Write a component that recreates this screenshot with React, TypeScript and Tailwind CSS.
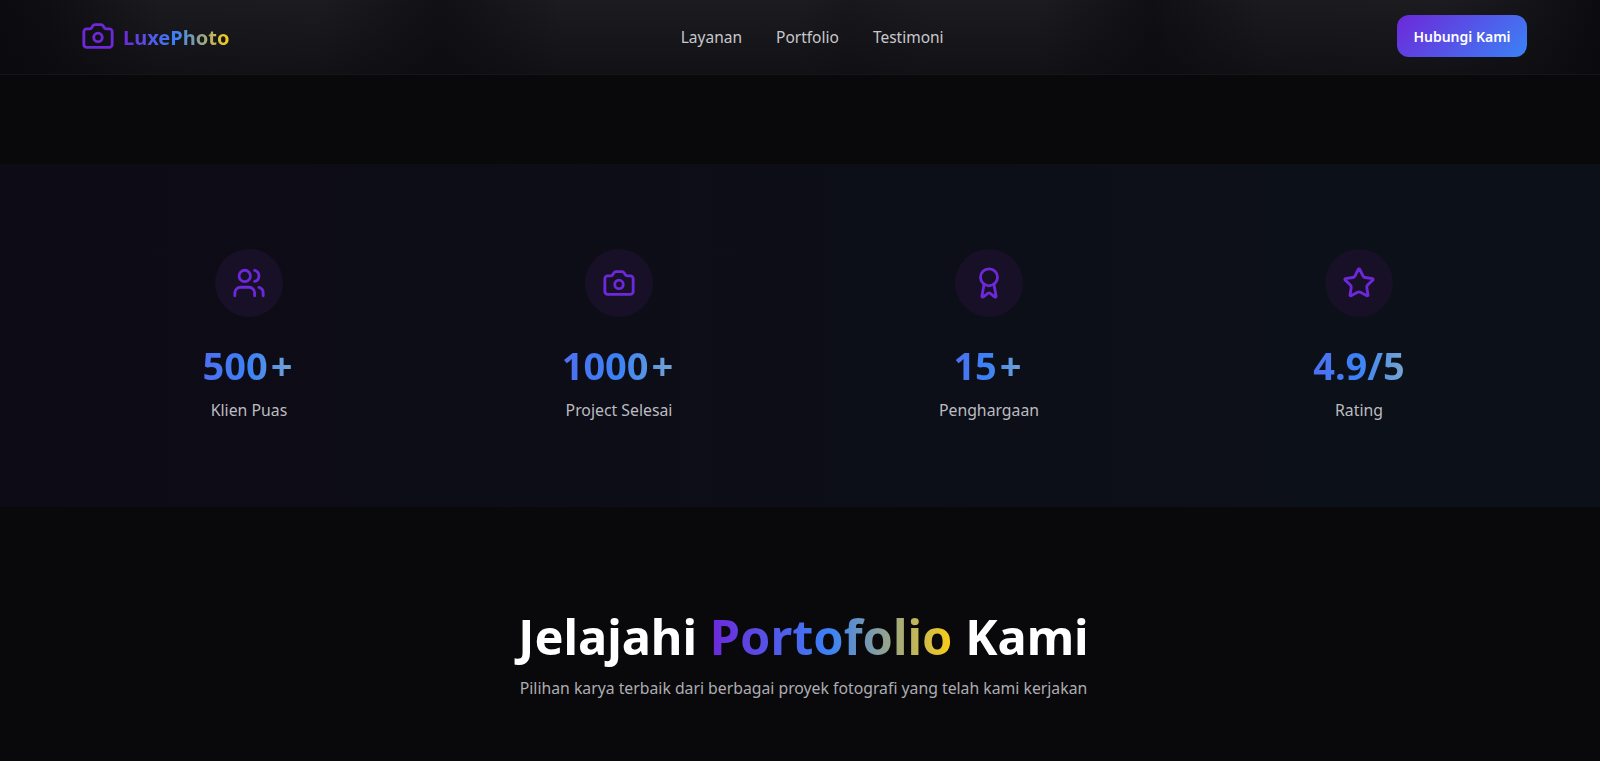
import { Camera, Users, Award, Star } from "lucide-react";

const font = "font-['Noto_Sans','Open_Sans',sans-serif]";

const stats = [
  { icon: Users, value: "500", suffix: "+", label: "Klien Puas" },
  { icon: Camera, value: "1000", suffix: "+", label: "Project Selesai" },
  { icon: Award, value: "15", suffix: "+", label: "Penghargaan" },
  { icon: Star, value: "4.9/5", suffix: "", label: "Rating" },
];

export default function App() {
  return (
    <div className={`${font} h-[761px] overflow-hidden bg-[#09090c] text-white`}>
      <header className="h-[75px] border-b border-[#15151a] bg-[linear-gradient(90deg,#0c0c10_0%,#0f0f13_3%,#1a1a1f_10%,#1b1b20_20%,#111115_27.5%,#1b1b20_35%,#1b1b20_50%,#18181c_53%,#1b1b20_58%,#1b1b20_65%,#101014_72%,#1a1a1f_79%,#1b1b20_90%,#141418_96%,#0c0c10_100%)]">
        <div className="h-full bg-[linear-gradient(180deg,rgba(9,9,12,0)_0%,rgba(9,9,12,0.5)_100%)]">
          <div className="flex h-full items-center justify-between pl-20 pr-[73px]">
            <div className="ml-[1px] flex items-center gap-[8px]">
              <Camera size={34} strokeWidth={2} className="-mt-[2px] text-[#6d28d9]" />
              <span className="mt-[2px] bg-[linear-gradient(90deg,#6d28d9,#3b82f6,#facc15)] bg-clip-text text-[20px] font-bold text-transparent">
                LuxePhoto
              </span>
            </div>
            <nav className="mr-[2px] flex items-center gap-[34px] pt-[2px] text-[15.5px] text-[#c8c8cc]">
              <span>Layanan</span>
              <span>Portfolio</span>
              <span>Testimoni</span>
            </nav>
            <button className="-mt-[2px] h-[42px] w-[130px] rounded-xl bg-[linear-gradient(135deg,#6d28d9,#3b82f6)] text-[14px] font-semibold text-white">
              Hubungi Kami
            </button>
          </div>
        </div>
      </header>

      <div className="h-[89px]" />

      <section className="h-[343px] bg-[linear-gradient(90deg,#0d0b16,#0c1119)] pt-[85px]">
        <div className="grid grid-cols-4 gap-8 pl-20 pr-[72px]">
          {stats.map(({ icon: Icon, value, suffix, label }) => (
            <div key={label} className="flex flex-col items-center">
              <div className="flex h-[68px] w-[68px] items-center justify-center rounded-full bg-[#181027]">
                <Icon size={34} strokeWidth={2} className="text-[#6d28d9]" />
              </div>
              <div className="mt-[24px] bg-[linear-gradient(90deg,#4f6ff0,#3b82f6_50%,#78a6d0)] bg-clip-text text-[38px] font-bold leading-[48px] text-transparent">
                {value}
                {suffix && <span className="mx-[3px]">{suffix}</span>}
              </div>
              <div className="mt-[9px] text-[15.8px] leading-6 text-[#bcbcc0]">{label}</div>
            </div>
          ))}
        </div>
      </section>

      <section className="pl-20 pr-[73px] pt-[99px] text-center">
        <h2 className="text-[48.7px] font-bold leading-[60px] text-white">
          Jelajahi{" "}
          <span className="bg-[linear-gradient(90deg,#6d28d9,#3b82f6,#facc15)] bg-clip-text text-transparent">
            Portofolio
          </span>{" "}
          Kami
        </h2>
        <p className="mt-[10px] text-[15.77px] leading-6 text-[#adadb1]">
          Pilihan karya terbaik dari berbagai proyek fotografi yang telah kami kerjakan
        </p>
      </section>
    </div>
  );
}
